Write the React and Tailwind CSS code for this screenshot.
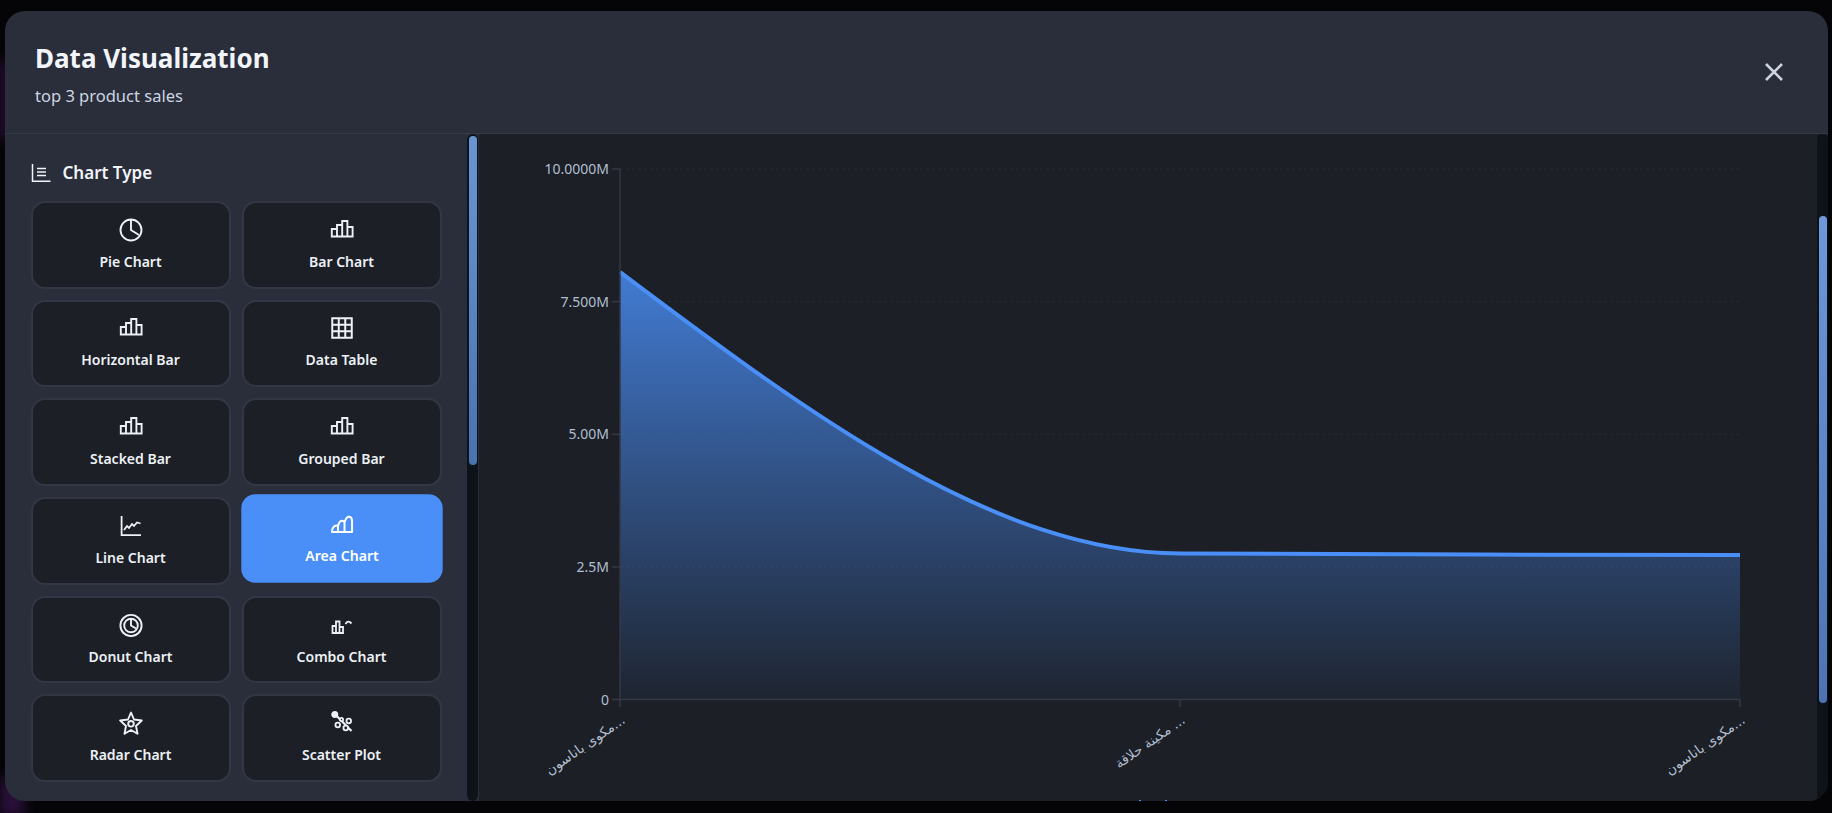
import React from 'react';

function PieIcon() {
    return (
        <svg width="24" height="24" viewBox="0 0 24 24" fill="none" stroke="currentColor" strokeWidth="1.9">
            <circle cx="12" cy="12" r="10.5" />
            <path d="M12 1.5V12L20 17" />
        </svg>
    );
}

function BarIcon() {
    return (
        <svg width="24" height="24" viewBox="0 0 24 24" fill="none" stroke="currentColor" strokeWidth="1.9">
            <path d="M1.8 18.5V11H7V18.5ZM7 18.5V7H12.2V18.5ZM12.2 18.5V3H17.4V18.5ZM17.4 18.5V9H22.6V18.5Z" />
        </svg>
    );
}

function TableIcon() {
    return (
        <svg width="24" height="24" viewBox="0 0 24 24" fill="none" stroke="currentColor" strokeWidth="2">
            <rect x="2.25" y="2.25" width="19.5" height="19.5" />
            <path d="M8.75 2.25V21.75M15.25 2.25V21.75M2.25 8.75H21.75M2.25 15.25H21.75" />
        </svg>
    );
}

function LineIcon() {
    return (
        <svg width="24" height="24" viewBox="0 0 24 24" fill="none" stroke="currentColor" strokeWidth="1.8">
            <path d="M2.6 2V21.2H22" />
            <path d="M5 16L8 12L10 14L13 10L15 12L18 8.5L21.5 9.5" />
        </svg>
    );
}

function AreaIcon() {
    return (
        <svg width="24" height="24" viewBox="0 0 24 24" fill="none" stroke="currentColor" strokeWidth="2" strokeLinejoin="round">
            <path d="M2 20.5C2 17 4 14 6.5 14L8 14.5C9 11 11 9 13 9.5L14.5 11C15.5 7 17.5 5 19.5 5.5C21.5 6 22 8 22 10V20.5ZM8 14.5V20.5M14.5 11V20.5" />
        </svg>
    );
}

function DonutIcon() {
    return (
        <svg width="24" height="24" viewBox="0 0 24 24" fill="none" stroke="currentColor" strokeWidth="1.9">
            <circle cx="12" cy="12.5" r="10.6" />
            <circle cx="12" cy="12.5" r="6.8" />
            <path d="M12 5.5V12.5L17 15.5" />
        </svg>
    );
}

function ComboIcon() {
    return (
        <svg width="24" height="24" viewBox="0 0 24 24" fill="none" stroke="currentColor" strokeWidth="1.8">
            <path d="M2.5 20V13H6V20ZM6 20V8.5H9.5V20ZM9.5 20V14H13V20ZM2.5 20H13" />
            <path d="M15.5 11Q18 6.5 21.5 10.5" strokeWidth="1.9" />
        </svg>
    );
}

function RadarIcon() {
    return (
        <svg width="24" height="24" viewBox="0 0 24 24" fill="none" stroke="currentColor" strokeWidth="1.9" strokeLinejoin="round">
            <path d="M12 1.5L15 8.5L22.8 9.5L17 15L18.5 22.8L12 19L5.5 22.8L7 15L1.2 9.5L9 8.5Z" />
            <circle cx="12" cy="12.8" r="2.8" />
        </svg>
    );
}

function ScatterIcon() {
    return (
        <svg width="24" height="24" viewBox="0 0 24 24" fill="none" stroke="currentColor" strokeWidth="1.8">
            <path d="M4.75 3L21.5 20" strokeWidth="2.2" />
            <circle cx="4.75" cy="3.5" r="2.6" fill="currentColor" />
            <circle cx="18.75" cy="10" r="2.3" fill="#1c1f26" />
            <circle cx="7.75" cy="14" r="2.3" fill="#1c1f26" />
            <circle cx="15.75" cy="17" r="2.3" fill="#1c1f26" />
            <circle cx="11.5" cy="8.5" r="1.6" fill="#1c1f26" />
        </svg>
    );
}

const chartTypes = [
    { label: 'Pie Chart', Icon: PieIcon },
    { label: 'Bar Chart', Icon: BarIcon },
    { label: 'Horizontal Bar', Icon: BarIcon },
    { label: 'Data Table', Icon: TableIcon },
    { label: 'Stacked Bar', Icon: BarIcon },
    { label: 'Grouped Bar', Icon: BarIcon },
    { label: 'Line Chart', Icon: LineIcon },
    { label: 'Area Chart', Icon: AreaIcon, active: true },
    { label: 'Donut Chart', Icon: DonutIcon },
    { label: 'Combo Chart', Icon: ComboIcon },
    { label: 'Radar Chart', Icon: RadarIcon },
    { label: 'Scatter Plot', Icon: ScatterIcon },
];

const yTicks = [
    { y: 169, label: '10.0000M' },
    { y: 301.6, label: '7.500M' },
    { y: 434.3, label: '5.00M' },
    { y: 566.9, label: '2.5M' },
    { y: 699.5, label: '0' },
];

const xTicks = [
    { x: 620, label: 'مكوى باناسون...' },
    { x: 1180, label: 'مكينة حلاقة ...' },
    { x: 1740, label: 'مكوى باناسون...' },
];

const curve = 'M620 272C806.67 412.2 993.33 552.5 1180 553.5C1366.67 554.5 1553.33 554.75 1740 555';

function AreaChart() {
    return (
        <svg width="1338" height="667" viewBox="479 134 1338 667" className="block">
            <defs>
                <linearGradient id="areaFill" x1="0" y1="0" x2="0" y2="1">
                    <stop offset="0%" stopColor="#4a8ff8" stopOpacity="0.82" />
                    <stop offset="100%" stopColor="#4a8ff8" stopOpacity="0.05" />
                </linearGradient>
            </defs>

            {yTicks.slice(0, 4).map((t) => (
                <line key={t.y} x1="620" x2="1740" y1={t.y} y2={t.y} stroke="#262a33" strokeDasharray="3 3" />
            ))}

            <path d={curve + 'L1740 699.5L620 699.5Z'} fill="url(#areaFill)" />
            <path d={curve} fill="none" stroke="#4a8ff8" strokeWidth="4" />

            <path d="M620 169V699.5H1740" fill="none" stroke="#343946" strokeWidth="1.5" />
            {yTicks.map((t) => (
                <g key={t.y}>
                    <line x1="612" x2="620" y1={t.y} y2={t.y} stroke="#343946" strokeWidth="1.5" />
                    <text x="609" y={t.y + 5} textAnchor="end" fontSize="14" fill="#b2bfd1" fontFamily='"Noto Sans", sans-serif'>
                        {t.label}
                    </text>
                </g>
            ))}
            {xTicks.map((t) => (
                <g key={t.x}>
                    <line x1={t.x} x2={t.x} y1="699.5" y2="707" stroke="#343946" strokeWidth="1.5" />
                    <text
                        x={t.x + 6}
                        y="722"
                        textAnchor="end"
                        fontSize="13.5"
                        fill="#b2bfd1"
                        fontFamily='"DejaVu Sans", sans-serif'
                        transform={`rotate(-35 ${t.x + 6} 722)`}
                    >
                        {t.label}
                    </text>
                </g>
            ))}

            {/* legend, cut off by the bottom of the panel */}
            <rect x="1139" y="800" width="2" height="1" fill="#4a8ff8" />
            <rect x="1165" y="800" width="2" height="1" fill="#4a8ff8" />
        </svg>
    );
}

export default function App() {
    return (
        <div className="relative h-screen overflow-hidden bg-[#050507] pt-[11px] pr-[4px] pb-[12px] pl-[5px] font-['Noto_Sans','DejaVu_Sans',sans-serif]">
            <div className="absolute left-0 top-[60px] h-[80px] w-[10px] bg-[#2a0f3a] blur-[6px]" />
            <div className="absolute -bottom-[4px] left-0 h-[40px] w-[24px] bg-[#2a0f3a] blur-[6px]" />

            <div className="relative flex h-full flex-col overflow-hidden rounded-[20px] bg-[#2a2d3a]">
                <header className="flex h-[123px] shrink-0 items-center justify-between border-b border-[#363a47] pl-[30px] pr-[42px]">
                    <div className="pt-[5px]">
                        <h1 className="text-[26px] leading-[34px] font-bold text-[#f1f5f9]">Data Visualization</h1>
                        <p className="mt-[9px] text-[16.5px] leading-[24px] text-[#cbd5e1]">top 3 product sales</p>
                    </div>
                    <svg width="24" height="24" viewBox="0 0 24 24" fill="none" stroke="#cbd5e1" strokeWidth="2.6" className="mt-[-1px]">
                        <path d="M4 4L20 20M20 4L4 20" />
                    </svg>
                </header>

                <div className="flex min-h-0 flex-1">
                    <aside className="w-[462px] shrink-0 pl-[25.5px] pr-[25.5px] pt-[29px]">
                        <div className="mb-[18px] flex h-[20px] items-center gap-[12px]">
                            <svg width="20" height="20" viewBox="0 0 20 20" fill="none" stroke="#f1f5f9" strokeWidth="1.5">
                                <path d="M1.5 1V18.2H19.5" />
                                <path d="M6 5.5H15M6 9H15M6 12.5H15" />
                            </svg>
                            <span className="text-[17px] font-semibold text-[#f1f5f9]">Chart Type</span>
                        </div>
                        <div className="grid grid-cols-2 gap-x-[11px] gap-y-[11.2px]">
                            {chartTypes.map(({ label, Icon, active }) => (
                                <div
                                    key={label}
                                    className={
                                        active
                                            ? 'flex h-[87.5px] -translate-y-[2.5px] scale-[1.007] flex-col items-center justify-center gap-[10px] rounded-[14px] border-2 border-[#4a8ff8] bg-[#4a8ff8] text-white'
                                            : 'flex h-[87.5px] flex-col items-center justify-center gap-[10px] rounded-[14px] border-2 border-[#333745] bg-[#1c1f26] text-[#edf1f6]'
                                    }
                                >
                                    <Icon />
                                    <span className="text-[14px] leading-[20px] font-semibold">{label}</span>
                                </div>
                            ))}
                        </div>
                    </aside>

                    <div className="w-[12px] shrink-0 rounded-[6px] border-r border-[#2a2e38] bg-[#0e1319] pl-[2px] pr-[1px] pt-[2px]">
                        <div className="h-[329px] rounded-[5px] bg-gradient-to-b from-[#6a95d3] to-[#4a72b0]" />
                    </div>

                    <main className="flex min-w-0 flex-1 bg-[#1c1f26]">
                        <AreaChart />
                        <div className="w-[11px] shrink-0 rounded-[5px] bg-[#0e1319] pl-[2px] pr-[1px] pt-[82px]">
                            <div className="h-[487px] rounded-[5px] bg-gradient-to-b from-[#6f98d8] to-[#4d73b3]" />
                        </div>
                    </main>
                </div>
            </div>
        </div>
    );
}
